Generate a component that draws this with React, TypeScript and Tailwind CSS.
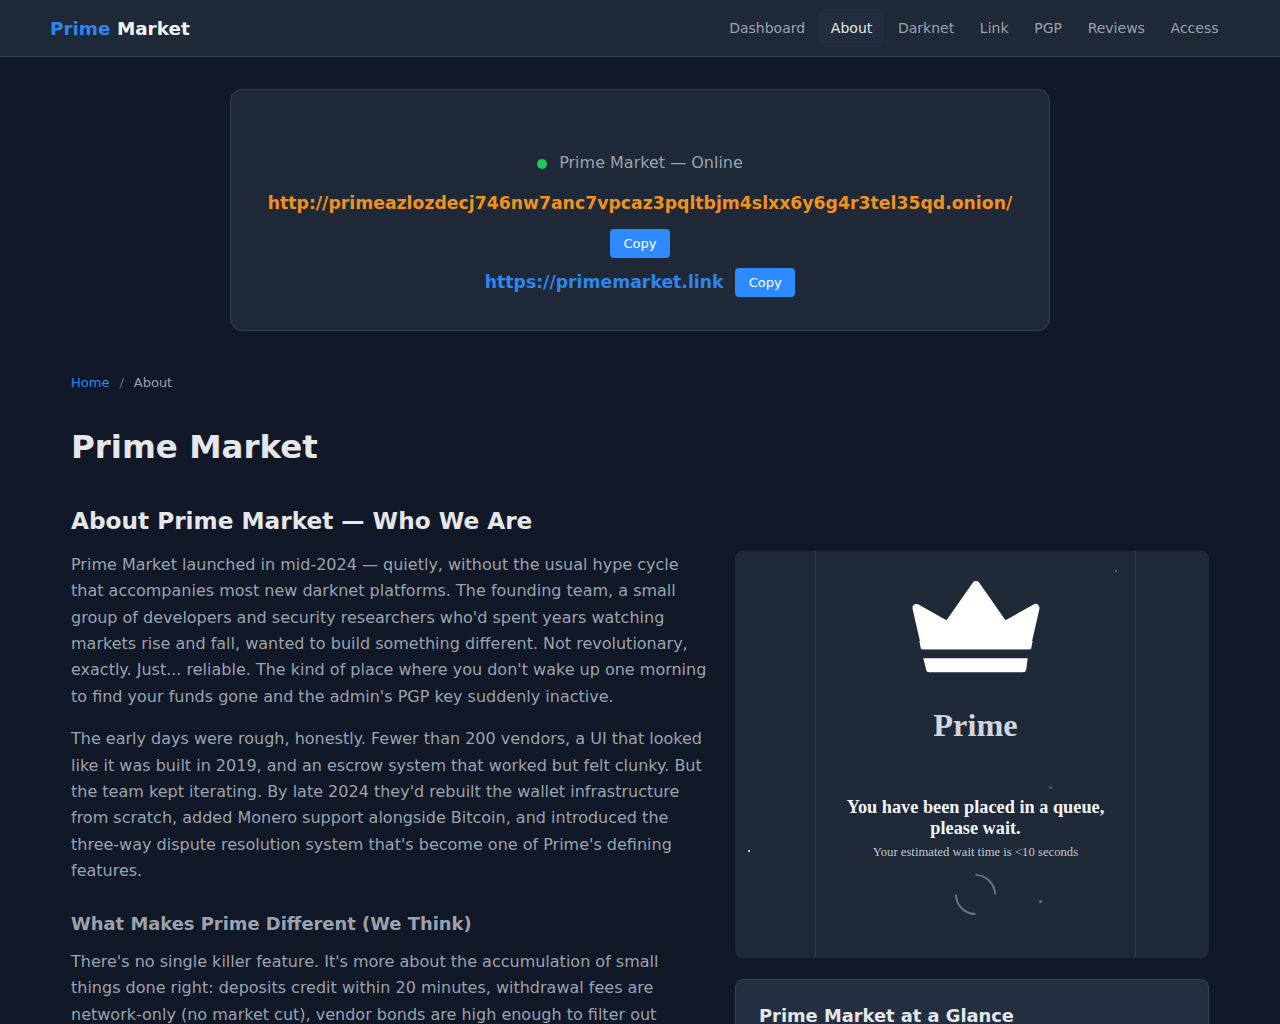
const navLinks = ["Dashboard", "About", "Darknet", "Link", "PGP", "Reviews", "Access"];

function CopyButton() {
  return (
    <button className="bg-[#2e8bff] text-white text-[13px] leading-[19px] px-[13.6px] py-[5px] rounded-[4px]">
      Copy
    </button>
  );
}

function Crown() {
  return (
    <svg width="128" height="92" viewBox="0 0 128 92" className="block" fill="#ffffff">
      <path stroke="#ffffff" strokeWidth="8" strokeLinejoin="round" d="M64 4 L92.3 44.5 L123.5 27 L115 64.3 L13 64.3 L4.5 27 L35.7 44.5 Z" />
      <path d="M7.3 60 L120.7 60 L119 68.3 L9 68.3 Z" />
      <path d="M11.3 77.3 H115.7 L114.3 88 Q114 91.3 111 91.3 H17.3 Q14.3 91.3 14 88 Z" />
    </svg>
  );
}

function QueueCard() {
  return (
    <div className="relative h-[407px] rounded-lg bg-[#1f2937] pl-[80px] overflow-hidden">
      <span className="absolute left-[13px] top-[299px] w-[2px] h-[2px] rounded-full bg-white" />
      <span className="absolute left-[380px] top-[19px] w-[2px] h-[2px] rounded-full bg-[#64748b]" />
      <span className="absolute left-[314px] top-[235px] w-[3px] h-[3px] rounded-full bg-[#475569]" />
      <span className="absolute left-[304px] top-[349px] w-[3px] h-[3px] rounded-full bg-[#64748b]" />
      <div className="w-[321px] h-full border-x border-[#2f3949] flex flex-col items-center pt-[30px]">
        <Crown />
        <div className="mt-[31px] text-[32.3px] leading-[42px] font-bold text-[#d1d5db] font-['Liberation_Serif',serif]">Prime</div>
        <div className="mt-[51px] w-[280px] text-center text-[18.3px] leading-[21px] font-bold text-[#f1f5f9] font-['Liberation_Serif',serif]">
          You have been placed in a queue, please wait.
        </div>
        <div className="mt-[5px] text-[12.7px] leading-[17px] text-[#c0c8d4] font-['Liberation_Serif',serif]">
          Your estimated wait time is &lt;10 seconds
        </div>
        <svg width="41" height="41" viewBox="0 0 42 42" fill="none" stroke="#6b7280" strokeWidth="2" className="mt-[13px]">
          <path d="M21 1 A20 20 0 0 1 41 21" />
          <path d="M21 41 A20 20 0 0 1 1 21" />
        </svg>
      </div>
    </div>
  );
}

export default function App() {
  return (
    <div className="h-[1024px] overflow-hidden bg-[#111827] font-['DejaVu_Sans',sans-serif]">
      <nav className="h-[57px] bg-[#1f2937] border-b border-[#374151] flex items-center justify-between pl-[50px] pr-[49.5px]">
        <div className="pt-[1px] text-[18.4px] font-bold">
          <span className="text-[#2e86f0]">Prime</span> <span className="text-[#f1f5f9]">Market</span>
        </div>
        <div className="flex items-center gap-[1.7px] text-[14px]">
          {navLinks.map((l) => (
            <a
              key={l}
              className={
                l === "About"
                  ? "px-3 py-[9px] leading-[20px] rounded-md bg-[#222d3e] text-[#e5e7eb]"
                  : "px-3 py-[9px] leading-[20px] text-[#9ca3af]"
              }
            >
              {l}
            </a>
          ))}
        </div>
      </nav>

      <section className="mt-8 mx-auto w-[820px] h-[242px] bg-[#1f2937] border border-[#374151] rounded-xl flex flex-col items-center pt-[61px]">
        <div className="flex items-center text-[#9ca3af] text-[16px] leading-[24px]">
          <span className="w-[10px] h-[10px] rounded-full bg-[#22c55e] mr-[12px] mt-[2px]" />
          Prime Market — Online
        </div>
        <div className="mt-[16px] text-[#f0921f] text-[17.28px] leading-[24px] font-bold whitespace-nowrap">
          http://primeazlozdecj746nw7anc7vpcaz3pqltbjm4slxx6y6g4r3tel35qd.onion/
        </div>
        <div className="mt-[14px]"><CopyButton /></div>
        <div className="mt-[10px] flex items-center gap-[11.5px]">
          <span className="text-[#2e86f0] text-[17.28px] font-bold">https://primemarket.link</span>
          <CopyButton />
        </div>
      </section>

      <main className="w-[1138px] ml-[71px] mt-[42px]">
        <div className="text-[13px] leading-[20px] flex gap-[10px]">
          <a className="text-[#2e86f0]">Home</a>
          <span className="text-[#6b7280]">/</span>
          <span className="text-[#9ca3af]">About</span>
        </div>
        <h1 className="mt-[32px] text-[32.5px] leading-[44px] font-bold text-[#e5e7eb]">Prime Market</h1>
        <h2 className="mt-[37px] text-[23.2px] leading-[30px] font-bold text-[#e5e7eb]">About Prime Market — Who We Are</h2>

        <div className="mt-[15px] grid grid-cols-[640px_474px] gap-6 items-start">
          <div className="pt-[0.7px] text-[16px] leading-[26.4px] text-[#9ca3af]">
            <p>
              Prime Market launched in mid-2024 — quietly, without the usual hype cycle that accompanies most new darknet platforms. The founding team, a small group of developers and security researchers who'd spent years watching markets rise and fall, wanted to build something different. Not revolutionary, exactly. Just... reliable. The kind of place where you don't wake up one morning to find your funds gone and the admin's PGP key suddenly inactive.
            </p>
            <p className="mt-4">
              The early days were rough, honestly. Fewer than 200 vendors, a UI that looked like it was built in 2019, and an escrow system that worked but felt clunky. But the team kept iterating. By late 2024 they'd rebuilt the wallet infrastructure from scratch, added Monero support alongside Bitcoin, and introduced the three-way dispute resolution system that's become one of Prime's defining features.
            </p>
            <h3 className="mt-[26.3px] text-[17.92px] leading-[26px] font-bold text-[#9ca3af]">What Makes Prime Different (We Think)</h3>
            <p className="mt-[12px]">
              There's no single killer feature. It's more about the accumulation of small things done right: deposits credit within 20 minutes, withdrawal fees are network-only (no market cut), vendor bonds are high enough to filter out
            </p>
          </div>
          <aside>
            <QueueCard />
            <div className="mt-[21px] h-[100px] rounded-lg bg-[#243042] border border-[#374151] pl-[23px] pt-[24px]">
              <h3 className="text-[17.85px] leading-[24px] font-bold text-[#e5e7eb]">Prime Market at a Glance</h3>
            </div>
          </aside>
        </div>
      </main>
    </div>
  );
}
